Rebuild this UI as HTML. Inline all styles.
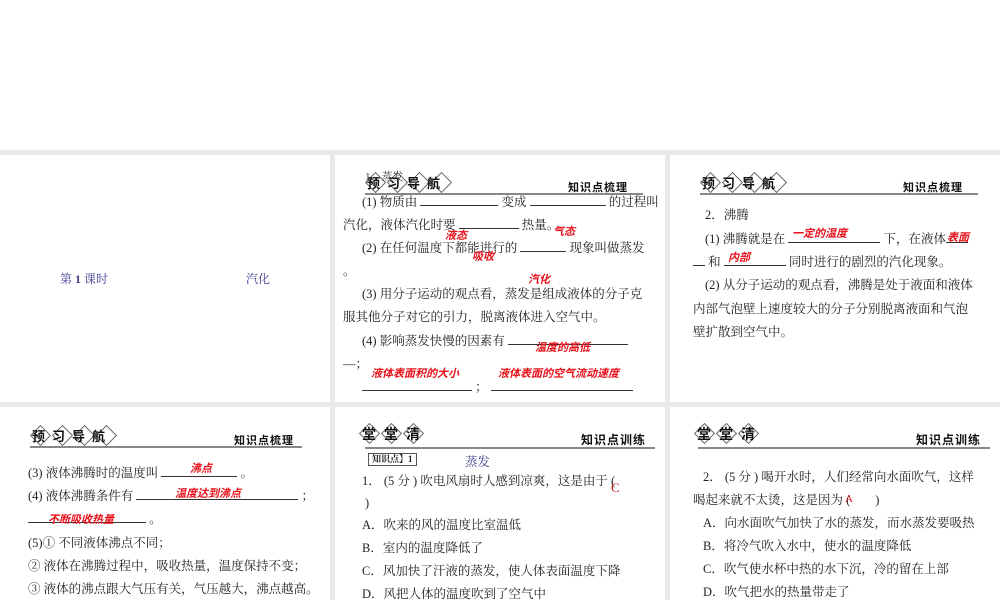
<!DOCTYPE html>
<html><head><meta charset="utf-8"><style>
*{margin:0;padding:0;box-sizing:border-box}
body{width:1000px;height:600px;background:#fff;position:relative;overflow:hidden;font-family:"Liberation Serif","Noto Serif CJK SC","Noto Sans CJK SC",serif;color:#222}
.gray{position:absolute;background:#e9e9e9}
.p{position:absolute;background:#fff;overflow:hidden}
.t{position:absolute;white-space:nowrap;font-size:12.5px;line-height:16px}
.r{position:absolute;white-space:nowrap;color:#e8101a;font-weight:bold;font-style:italic;font-size:11px;font-family:"Noto Sans CJK SC",sans-serif}
.u{display:inline-block;border-bottom:1px solid #333;height:12px;vertical-align:baseline}
.hl{position:absolute;height:2px;background:#888}
.badge{position:absolute;height:22px;width:100px}
.dm{position:absolute;width:15px;height:15px;transform:rotate(45deg);border:1px solid #666;background:#fff;top:3px}
.bt{position:absolute;top:1px;font-weight:bold;font-size:13px;font-family:"Noto Sans CJK SC",sans-serif;color:#111;white-space:nowrap;line-height:20px}
.kt{position:absolute;font-weight:bold;font-size:11px;font-family:"Noto Sans CJK SC",sans-serif;color:#111;letter-spacing:1px;white-space:nowrap}
</style></head><body>
<div class="gray" style="left:0;top:150px;width:1000px;height:450px"></div>

<!-- panel 1 -->
<div class="p" style="left:0;top:155px;width:330px;height:247px">
<div class="t" style="left:60px;top:116px;color:#3a3a8a;font-size:12px">第 <b>1</b> 课时</div>
<div class="t" style="left:246px;top:116px;color:#3a3a8a;font-size:12px">汽化</div>
</div>

<!-- panel 2 -->
<div class="p" style="left:335px;top:155px;width:330px;height:247px">
<div class="badge" style="left:28px;top:17px">
<div class="dm" style="left:5px"></div><div class="dm" style="left:27px"></div><div class="dm" style="left:49px"></div><div class="dm" style="left:71px"></div>
<div class="bt" style="left:4px;letter-spacing:7px">预习导航</div></div>
<div class="t" style="left:30px;top:14px;font-size:11px;color:#444">1．蒸发</div>
<div class="kt" style="left:233px;top:24px">知识点梳理</div>
<div class="hl" style="left:30px;top:38px;width:278px"></div>
<div class="t" style="left:27px;top:39px">(1) 物质由 <span class="u" style="width:78px"></span> 变成 <span class="u" style="width:76px"></span> 的过程叫</div>
<div class="t" style="left:8px;top:62px">汽化，液体汽化时要 <span class="u" style="width:60px"></span> 热量。</div>
<div class="r" style="left:110px;top:72px">液态</div>
<div class="r" style="left:218px;top:68px">气态</div>
<div class="t" style="left:27px;top:85px">(2) 在任何温度下都能进行的 <span class="u" style="width:46px"></span> 现象叫做蒸发</div>
<div class="r" style="left:137px;top:93px">吸收</div>
<div class="t" style="left:8px;top:108px">。</div>
<div class="r" style="left:193px;top:116px">汽化</div>
<div class="t" style="left:27px;top:131px">(3) 用分子运动的观点看，蒸发是组成液体的分子克</div>
<div class="t" style="left:8px;top:154px">服其他分子对它的引力，脱离液体进入空气中。</div>
<div class="t" style="left:27px;top:178px">(4) 影响蒸发快慢的因素有 <span class="u" style="width:120px"></span></div>
<div class="r" style="left:200px;top:184px">温度的高低</div>
<div class="t" style="left:8px;top:201px">—；</div>
<div class="r" style="left:36px;top:210px">液体表面积的大小</div>
<div class="r" style="left:163px;top:210px">液体表面的空气流动速度</div>
<div class="t" style="left:27px;top:224px"><span class="u" style="width:110px"></span> ； <span class="u" style="width:142px"></span></div>
</div>

<!-- panel 3 -->
<div class="p" style="left:670px;top:155px;width:330px;height:247px">
<div class="badge" style="left:28px;top:17px">
<div class="dm" style="left:5px"></div><div class="dm" style="left:27px"></div><div class="dm" style="left:49px"></div><div class="dm" style="left:71px"></div>
<div class="bt" style="left:4px;letter-spacing:7px">预习导航</div></div>
<div class="kt" style="left:233px;top:24px">知识点梳理</div>
<div class="hl" style="left:30px;top:38px;width:278px"></div>
<div class="t" style="left:35px;top:52px">2．沸腾</div>
<div class="t" style="left:35px;top:76px">(1) 沸腾就是在 <span class="u" style="width:92px"></span> 下，在液体<span class="u" style="width:22px"></span></div>
<div class="r" style="left:122px;top:70px">一定的温度</div>
<div class="r" style="left:277px;top:74px">表面</div>
<div class="t" style="left:23px;top:99px"><span class="u" style="width:12px"></span> 和 <span class="u" style="width:62px"></span> 同时进行的剧烈的汽化现象。</div>
<div class="r" style="left:58px;top:94px">内部</div>
<div class="t" style="left:35px;top:122px">(2) 从分子运动的观点看，沸腾是处于液面和液体</div>
<div class="t" style="left:23px;top:146px">内部气泡壁上速度较大的分子分别脱离液面和气泡</div>
<div class="t" style="left:23px;top:169px">壁扩散到空气中。</div>
</div>

<!-- panel 4 -->
<div class="p" style="left:0;top:407px;width:330px;height:193px">
<div class="badge" style="left:28px;top:18px">
<div class="dm" style="left:5px"></div><div class="dm" style="left:27px"></div><div class="dm" style="left:49px"></div><div class="dm" style="left:71px"></div>
<div class="bt" style="left:4px;letter-spacing:7px">预习导航</div></div>
<div class="kt" style="left:234px;top:25px">知识点梳理</div>
<div class="hl" style="left:30px;top:39px;width:272px"></div>
<div class="t" style="left:28px;top:58px">(3) 液体沸腾时的温度叫 <span class="u" style="width:76px"></span> 。</div>
<div class="r" style="left:190px;top:53px">沸点</div>
<div class="t" style="left:28px;top:81px">(4) 液体沸腾条件有 <span class="u" style="width:162px"></span> ；</div>
<div class="r" style="left:175px;top:78px">温度达到沸点</div>
<div class="t" style="left:28px;top:104px"><span class="u" style="width:118px"></span> 。</div>
<div class="r" style="left:48px;top:104px">不断吸收热量</div>
<div class="t" style="left:28px;top:128px">(5)① 不同液体沸点不同；</div>
<div class="t" style="left:28px;top:151px">② 液体在沸腾过程中，吸收热量，温度保持不变；</div>
<div class="t" style="left:28px;top:174px">③ 液体的沸点跟大气压有关，气压越大，沸点越高。</div>
</div>

<!-- panel 5 -->
<div class="p" style="left:335px;top:407px;width:330px;height:193px">
<div class="badge" style="left:22px;top:16px">
<div class="dm" style="left:5px"></div><div class="dm" style="left:27px"></div><div class="dm" style="left:49px"></div>
<div class="bt" style="left:5px;font-size:14px;letter-spacing:8px">堂堂清</div></div>
<div class="kt" style="left:246px;top:24px;font-size:12px">知识点训练</div>
<div class="hl" style="left:30px;top:40px;width:290px"></div>
<div class="t" style="left:33px;top:46px;font-size:9px;border:1px solid #555;padding:0 3px;line-height:11px;font-weight:bold">知识点】<b>1</b></div>
<div class="t" style="left:130px;top:47px;color:#3a3a8a">蒸发</div>
<div class="t" style="left:27px;top:66px">1． (5 分 ) 吹电风扇时人感到凉爽，这是由于 (</div>
<div class="t" style="left:276px;top:73px;color:#c01818;font-size:13px">C</div>
<div class="t" style="left:30px;top:88px">)</div>
<div class="t" style="left:27px;top:110px">A．吹来的风的温度比室温低</div>
<div class="t" style="left:27px;top:133px">B．室内的温度降低了</div>
<div class="t" style="left:27px;top:156px">C．风加快了汗液的蒸发，使人体表面温度下降</div>
<div class="t" style="left:27px;top:179px">D．风把人体的温度吹到了空气中</div>
</div>

<!-- panel 6 -->
<div class="p" style="left:670px;top:407px;width:330px;height:193px">
<div class="badge" style="left:22px;top:16px">
<div class="dm" style="left:5px"></div><div class="dm" style="left:27px"></div><div class="dm" style="left:49px"></div>
<div class="bt" style="left:5px;font-size:14px;letter-spacing:8px">堂堂清</div></div>
<div class="kt" style="left:246px;top:24px;font-size:12px">知识点训练</div>
<div class="hl" style="left:28px;top:40px;width:292px"></div>
<div class="t" style="left:33px;top:62px">2． (5 分 ) 喝开水时，人们经常向水面吹气，这样</div>
<div class="t" style="left:23px;top:85px">喝起来就不太烫，这是因为 (&nbsp;&nbsp;&nbsp;&nbsp;&nbsp;&nbsp;&nbsp;&nbsp;)</div>
<div class="t" style="left:175px;top:84px;color:#e8101a;font-size:11px">A</div>
<div class="t" style="left:33px;top:108px">A．向水面吹气加快了水的蒸发，而水蒸发要吸热</div>
<div class="t" style="left:33px;top:131px">B．将冷气吹入水中，使水的温度降低</div>
<div class="t" style="left:33px;top:154px">C．吹气使水杯中热的水下沉，冷的留在上部</div>
<div class="t" style="left:33px;top:177px">D．吹气把水的热量带走了</div>
</div>
</body></html>
